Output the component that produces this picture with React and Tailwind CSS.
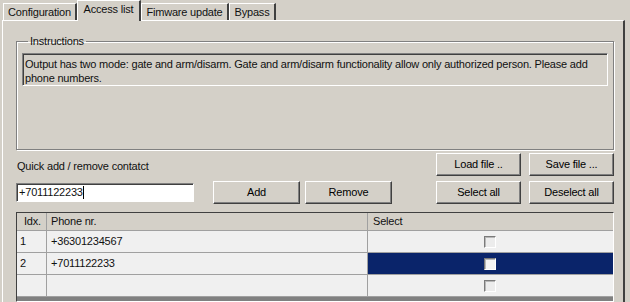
import React from 'react';

const raised =
  'border border-t-white border-l-white border-r-[#404040] border-b-[#404040] shadow-[inset_-1px_-1px_0_#808080]';

function Button({ children, className = '' }) {
  return (
    <button
      className={`h-[23px] w-[85px] bg-[#d4d0c8] text-[11px] tracking-[-0.2px] text-black flex items-center justify-center ${raised} ${className}`}
    >
      {children}
    </button>
  );
}

function Tab({ label, active, className = '' }) {
  if (active) {
    return (
      <div
        className={`relative z-10 -mb-px h-[21px] flex items-start justify-center pt-[2px] whitespace-nowrap bg-[#d4d0c8] border-t border-l border-t-white border-l-white border-r-2 border-r-[#404040] ${className}`}
      >
        {label}
      </div>
    );
  }
  return (
    <div
      className={`h-[17px] flex items-center justify-center whitespace-nowrap bg-[#d4d0c8] border-t border-l border-t-white border-l-white border-r-2 border-r-[#404040] ${className}`}
    >
      {label}
    </div>
  );
}

function Checkbox({ selected }) {
  return (
    <div
      className={`w-[12px] h-[12px] border border-t-[#7a7a7a] border-l-[#7a7a7a] border-r-white border-b-white shadow-[inset_1px_1px_0_#b8b8b8] ${
        selected ? 'bg-[#f4f4f4]' : 'bg-[#ececec]'
      }`}
    />
  );
}

const rows = [
  { idx: '1', phone: '+36301234567', selected: false },
  { idx: '2', phone: '+7011122233', selected: true },
  { idx: '', phone: '', selected: false },
];

export default function App() {
  return (
    <div className="w-[630px] h-[302px] overflow-hidden bg-[#d4d0c8] text-[#111] text-[11px] leading-[13px] tracking-[-0.2px] font-['Liberation_Sans',Arial,sans-serif] flex flex-col">
      {/* tab strip */}
      <div className="flex items-end h-[20px] pl-[3px]">
        <Tab label="Configuration" className="w-[74px]" />
        <Tab label="Access list" active className="w-[64px]" />
        <Tab label="Fimware update" className="w-[88px]" />
        <Tab label="Bypass" className="w-[47px]" />
      </div>

      {/* tab panel */}
      <div className="flex-1 ml-[2px] mr-[5px] border-t border-l border-t-white border-l-white border-r-2 border-r-[#404040] pl-[13px] pr-[9px] flex flex-col">
        <fieldset className="mt-[14px] h-[115px] border border-[#808080] shadow-[1px_1px_0_white,inset_1px_1px_0_white] px-[5px] pb-[11px] flex flex-col">
          <legend className="ml-[6px] px-[2px] leading-[13px]">Instructions</legend>
          <div className="mt-[5px] flex-1 border border-t-[#808080] border-l-[#808080] border-r-white border-b-white shadow-[inset_1px_1px_0_#404040] px-[2px] pt-[3px] leading-[14px]">
            Output has two mode: gate and arm/disarm. Gate and arm/disarm functionality allow only authorized person. Please add phone numbers.
          </div>
        </fieldset>

        {/* quick add row */}
        <div className="mt-[3px] flex justify-between items-end">
          <div className="flex flex-col">
            <div className="ml-[1px] mb-[8px]">Quick add / remove contatct</div>
            <div className="flex items-center">
              <div className="w-[178px] h-[19px] bg-white border border-t-[#808080] border-l-[#808080] border-r-white border-b-white shadow-[inset_1px_1px_0_#404040] flex items-center pl-[2px]">
                +7011122233<span className="inline-block w-px h-[13px] bg-black" />
              </div>
              <Button className="ml-[19px] w-[87px]">Add</Button>
              <Button className="ml-[5px] w-[87px]">Remove</Button>
            </div>
          </div>
          <div className="grid grid-cols-2 gap-x-[8px] gap-y-[5px]">
            <Button>Load file ..</Button>
            <Button>Save file ...</Button>
            <Button>Select all</Button>
            <Button>Deselect all</Button>
          </div>
        </div>

        {/* grid */}
        <div className="mt-[8px] flex-1 bg-[#808080] border border-t-[#404040] border-l-[#404040] border-r-white border-b-white flex flex-col">
          <div className="flex h-[18px] bg-[#d4d0c8] border-b border-b-[#a0a0a0]">
            <div className="w-[30px] pl-[7px] pt-[2px] border-r border-r-[#a0a0a0]">Idx.</div>
            <div className="w-[321px] pl-[4px] pt-[2px] border-r border-r-[#a0a0a0]">Phone nr.</div>
            <div className="flex-1 pl-[5px] pt-[2px]">Select</div>
          </div>
          {rows.map((r, i) => (
            <div key={i} className="flex h-[22px] bg-[#f0f0f0] border-b border-b-[#a0a0a0]">
              <div className="w-[30px] pl-[3px] flex items-center border-r border-r-[#a0a0a0]">{r.idx}</div>
              <div className="w-[321px] pl-[4px] flex items-center border-r border-r-[#a0a0a0]">{r.phone}</div>
              <div
                className={`flex-1 flex items-center justify-center pr-[2px] ${
                  r.selected ? 'bg-[#0a246a]' : ''
                }`}
              >
                <Checkbox selected={r.selected} />
              </div>
            </div>
          ))}
        </div>
      </div>
    </div>
  );
}
